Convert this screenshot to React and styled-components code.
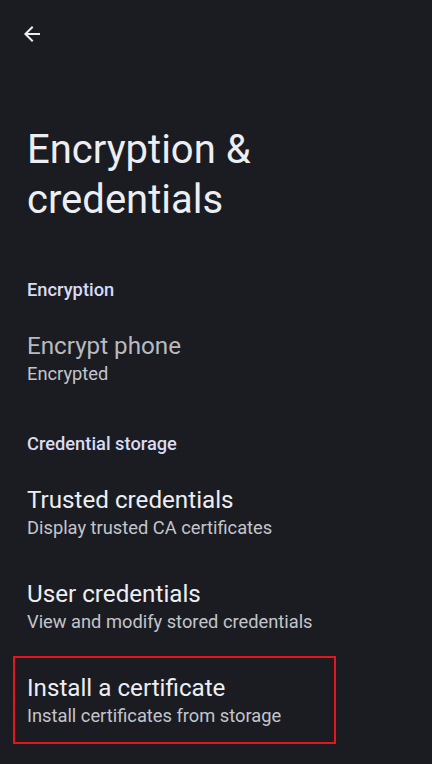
import React from 'react';
import styled, { createGlobalStyle } from 'styled-components';

const GlobalStyle = createGlobalStyle`
  html, body {
    margin: 0;
    padding: 0;
    background: #1b1c21;
  }
  body {
    font-family: Roboto, "Noto Sans", sans-serif;
    -webkit-font-smoothing: antialiased;
  }
`;

const Screen = styled.div`
  width: 432px;
  height: 764px;
  background: #1b1c21;
  overflow: hidden;
  color: #eceef3;
`;

const Toolbar = styled.div`
  height: 68px;
  display: flex;
  align-items: center;
  padding-left: 20px;
`;

const BackButton = styled.button`
  background: none;
  border: none;
  padding: 0;
  width: 24px;
  height: 24px;
  display: flex;
  align-items: center;
  justify-content: center;
  color: #eceef3;
  cursor: pointer;
`;

const Title = styled.h1`
  margin: 57px 0 27px;
  padding: 0 27px;
  font-size: 40px;
  font-weight: 400;
  line-height: 50px;
  color: #eceef3;
`;

const SectionHeader = styled.div`
  padding: 26px 27px 10px;
  font-size: 18.3px;
  font-weight: 500;
  line-height: 24px;
  color: #d7dbf5;
`;

const Item = styled.div`
  position: relative;
  padding: 19px 27px;
  display: flex;
  flex-direction: column;
`;

const ItemTitle = styled.div`
  font-size: 24.2px;
  line-height: 30px;
  color: ${p => (p.$disabled ? '#b8bac0' : '#eceef3')};
`;

const ItemSummary = styled.div`
  font-size: 18.3px;
  line-height: 26px;
  color: #c3c5cc;
`;

const Highlight = styled.div`
  position: absolute;
  left: 13px;
  top: 2px;
  width: 319px;
  height: 84px;
  border: 2px solid #e3161d;
  pointer-events: none;
`;

const ArrowBack = () => (
  <svg width="24" height="24" viewBox="0 0 24 24" fill="currentColor">
    <path d="M20 11H7.83l5.59-5.59L12 4l-8 8 8 8 1.41-1.41L7.83 13H20v-2z" />
  </svg>
);

export default function App() {
  return (
    <Screen>
      <GlobalStyle />
      <Toolbar>
        <BackButton aria-label="Back">
          <ArrowBack />
        </BackButton>
      </Toolbar>
      <Title>
        Encryption &amp;
        <br />
        credentials
      </Title>

      <SectionHeader>Encryption</SectionHeader>
      <Item>
        <ItemTitle $disabled>Encrypt phone</ItemTitle>
        <ItemSummary>Encrypted</ItemSummary>
      </Item>

      <SectionHeader>Credential storage</SectionHeader>
      <Item>
        <ItemTitle>Trusted credentials</ItemTitle>
        <ItemSummary>Display trusted CA certificates</ItemSummary>
      </Item>
      <Item>
        <ItemTitle>User credentials</ItemTitle>
        <ItemSummary>View and modify stored credentials</ItemSummary>
      </Item>
      <Item>
        <ItemTitle>Install a certificate</ItemTitle>
        <ItemSummary>Install certificates from storage</ItemSummary>
        <Highlight />
      </Item>
    </Screen>
  );
}
